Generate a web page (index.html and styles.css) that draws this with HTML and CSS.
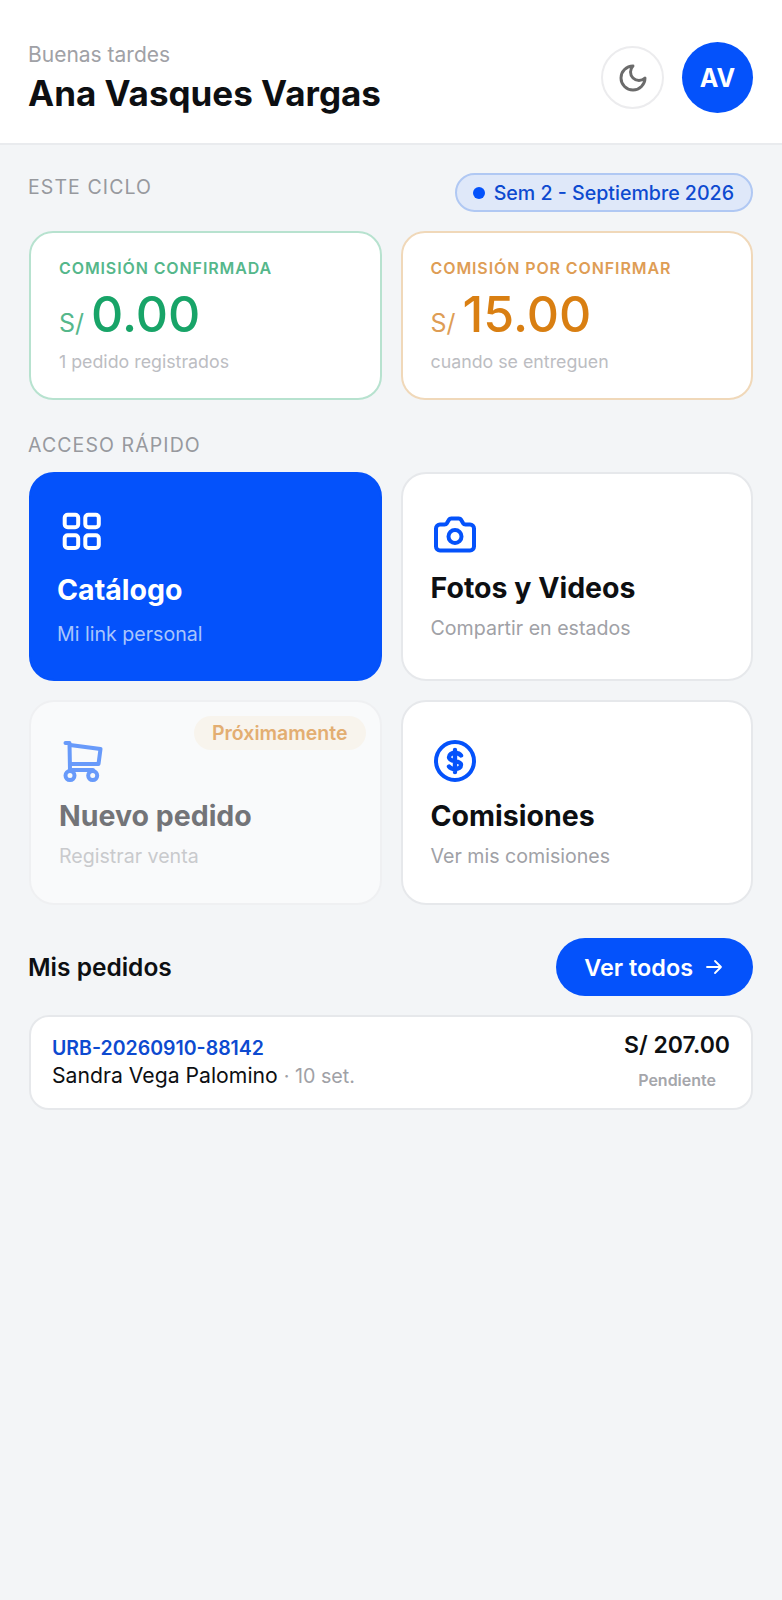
FILE: index.html
```html
<!DOCTYPE html>
<html lang="es">

<head>
    <meta charset="UTF-8">
    <meta name="viewport" content="width=device-width, initial-scale=1.0">
    <title>Inicio</title>
    <link rel="stylesheet" href="styles.css">
</head>

<body>
    <header class="topbar">
        <div class="topbar-text">
            <p class="greeting">Buenas tardes</p>
            <h1 class="user-name">Ana Vasques Vargas</h1>
        </div>
        <div class="topbar-actions">
            <button class="theme-btn" type="button" aria-label="Tema">
                <svg viewBox="0 0 24 24" width="32" height="32" fill="none" stroke="#6b6b6b" stroke-width="2.2" stroke-linecap="round" stroke-linejoin="round">
                    <path d="M12 3a6 6 0 0 0 9 9 9 9 0 1 1-9-9Z"/>
                </svg>
            </button>
            <div class="avatar">AV</div>
        </div>
    </header>

    <main class="content">
        <div class="cycle-row">
            <h2 class="section-label cycle-label">ESTE CICLO</h2>
            <span class="cycle-pill"><i class="cycle-dot"></i>Sem 2 - Septiembre 2026</span>
        </div>

        <section class="two-cols">
            <div class="stat-card stat-green">
                <p class="stat-title">COMISIÓN CONFIRMADA</p>
                <p class="stat-amount"><span class="stat-currency">S/</span><span class="stat-value">0.00</span></p>
                <p class="stat-note">1 pedido registrados</p>
            </div>
            <div class="stat-card stat-orange">
                <p class="stat-title">COMISIÓN POR CONFIRMAR</p>
                <p class="stat-amount"><span class="stat-currency">S/</span><span class="stat-value">15.00</span></p>
                <p class="stat-note">cuando se entreguen</p>
            </div>
        </section>

        <h2 class="section-label quick-label">ACCESO RÁPIDO</h2>

        <section class="two-cols quick-grid">
            <a class="quick-card quick-primary" href="#">
                <svg class="quick-icon" viewBox="0 0 48 48" width="48" height="48" fill="none" stroke="#fff" stroke-width="4" stroke-linejoin="round">
                    <rect x="6.700" y="7.700" width="13.500" height="12.600" rx="3"/>
                    <rect x="27.300" y="7.700" width="13.500" height="12.600" rx="3"/>
                    <rect x="6.700" y="28.300" width="13.500" height="12.600" rx="3"/>
                    <rect x="27.300" y="28.300" width="13.500" height="12.600" rx="3"/>
                </svg>
                <h3 class="quick-title">Catálogo</h3>
                <p class="quick-sub">Mi link personal</p>
            </a>
            <a class="quick-card" href="#">
                <svg class="quick-icon" viewBox="1 0 48 48" width="48" height="48" fill="none" stroke="#0452fb" stroke-width="4" stroke-linecap="round" stroke-linejoin="round">
                    <path d="M10 14.500h4.500a3 3 0 0 0 2.500-1.400l1.800-3.200a3 3 0 0 1 2.600-1.400h7.200a3 3 0 0 1 2.600 1.400l1.800 3.200a3 3 0 0 0 2.500 1.400H40a4 4 0 0 1 4 4v18a4 4 0 0 1-4 4H10a4 4 0 0 1-4-4v-18a4 4 0 0 1 4-4Z"/>
                    <circle cx="25" cy="26.500" r="6.500"/>
                </svg>
                <h3 class="quick-title">Fotos y Videos</h3>
                <p class="quick-sub">Compartir en estados</p>
            </a>
            <a class="quick-card quick-row2 quick-disabled" href="#">
                <span class="soon-badge">Próximamente</span>
                <svg class="quick-icon" viewBox="0 0 48 48" width="48" height="48" fill="none" stroke="#689afa" stroke-width="4" stroke-linecap="round" stroke-linejoin="round">
                    <path d="M7.500 6h4l.5 27"/>
                    <path d="M12 8l30.500 4-2 15H12"/>
                    <path d="M12 33h23"/>
                    <circle cx="12" cy="38.600" r="4.500"/>
                    <circle cx="34.700" cy="38.600" r="4.500"/>
                </svg>
                <h3 class="quick-title">Nuevo pedido</h3>
                <p class="quick-sub">Registrar venta</p>
            </a>
            <a class="quick-card quick-row2" href="#">
                <svg class="quick-icon" viewBox="1 0 48 48" width="48" height="48" fill="none" stroke="#0452fb" stroke-linecap="round" stroke-linejoin="round">
                    <circle cx="25" cy="24" r="19" stroke-width="4"/>
                    <path d="M31 18.500c-1-1.500-3-2.500-6-2.500-3.500 0-6 1.500-6 4.200 0 5.600 12 2.200 12 7.600 0 2.700-2.500 4.200-6 4.200-3 0-5-1-6-2.500M25 13v22" stroke-width="4.400"/>
                </svg>
                <h3 class="quick-title">Comisiones</h3>
                <p class="quick-sub">Ver mis comisiones</p>
            </a>
        </section>

        <div class="orders-head">
            <h2 class="orders-title">Mis pedidos</h2>
            <a class="all-btn" href="#">Ver todos
                <svg viewBox="0 0 18 18" width="18" height="18" fill="none" stroke="#fff" stroke-width="1.800" stroke-linecap="round" stroke-linejoin="round">
                    <path d="M2 9h14M10 3l6 6-6 6"/>
                </svg>
            </a>
        </div>

        <div class="order-card">
            <div>
                <p class="order-code">URB-20260910-88142</p>
                <p class="order-client">Sandra Vega Palomino <span class="order-date">· 10 set.</span></p>
            </div>
            <div class="order-side">
                <p class="order-total">S/ 207.00</p>
                <p class="order-status">Pendiente</p>
            </div>
        </div>
    </main>
</body>

</html>
```

FILE: styles.css
```css
* {
    box-sizing: border-box;
}

body {
    margin: 0;
    min-height: 1600px;
    background-color: #f3f5f7;
    color: #0d0f12;
    font-family: Inter, "Liberation Sans", sans-serif;
}

p, h1, h2, h3 {
    margin: 0;
}

a {
    color: inherit;
    text-decoration: none;
}

/* cabecera */
.topbar {
    display: flex;
    justify-content: space-between;
    align-items: center;
    height: 145px;
    padding: 12px 29px 0 28px;
    background-color: #fff;
    border-bottom: 2px solid #e9ebee;
}

.topbar-text {
    margin-top: 2px;
}

.greeting {
    color: #a0a1a6;
    font-size: 21px;
    line-height: 24px;
}

.user-name {
    margin-top: 5px;
    font-size: 35px;
    font-weight: 700;
    line-height: 42px;
}

.topbar-actions {
    display: flex;
    align-items: center;
    gap: 18px;
}

.theme-btn {
    display: flex;
    justify-content: center;
    align-items: center;
    width: 63px;
    height: 63px;
    padding: 0;
    background-color: #fff;
    border: 2px solid #ececee;
    border-radius: 50%;
}

.avatar {
    display: flex;
    justify-content: center;
    align-items: center;
    width: 71px;
    height: 71px;
    background-color: #0452fb;
    border-radius: 50%;
    color: #fff;
    font-size: 25px;
    font-weight: 700;
}

.content {
    padding: 0 29px;
}

.cycle-row {
    display: flex;
    justify-content: space-between;
    align-items: flex-start;
    padding-top: 28px;
}

.section-label {
    margin-left: -1px;
    color: #97999e;
    font-size: 19.5px;
    font-weight: 400;
    letter-spacing: 1.1px;
    line-height: 24px;
}

.cycle-label {
    margin-top: 2px;
}

.cycle-pill {
    display: flex;
    align-items: center;
    gap: 9px;
    height: 39px;
    padding: 0 17px 0 16px;
    background-color: #dfe8f9;
    border: 2px solid #b0c8f3;
    border-radius: 20px;
    color: #0d4ad0;
    font-size: 19.6px;
    font-weight: 500;
}

.cycle-dot {
    width: 12px;
    height: 12px;
    background-color: #0452fb;
    border-radius: 50%;
}

.two-cols {
    display: grid;
    grid-template-columns: 1fr 1fr;
    gap: 19px;
}

/* tarjetas de comision */
.stat-card {
    height: 169px;
    margin-top: 19px;
    padding: 25px 28px 0;
    background-color: #fff;
    border: 2px solid;
    border-radius: 24px;
}

.stat-green {
    border-color: #b7e2cf;
}

.stat-orange {
    border-color: #f0d8b9;
}

.stat-title {
    font-size: 16px;
    font-weight: 600;
    letter-spacing: 0.9px;
    line-height: 20px;
}

.stat-green .stat-title,
.stat-green .stat-currency {
    color: #55b78b;
}

.stat-orange .stat-title,
.stat-orange .stat-currency {
    color: #de9d55;
}

.stat-amount {
    display: flex;
    align-items: baseline;
    gap: 7px;
    margin-top: 11px;
}

.stat-currency {
    font-size: 25px;
    line-height: 1;
}

.stat-value {
    font-size: 50px;
    font-weight: 500;
    line-height: 1;
}

.stat-green .stat-value {
    color: #18a468;
}

.stat-orange .stat-value {
    color: #d97f12;
}

.stat-note {
    margin-top: 11px;
    color: #bcbdc2;
    font-size: 17.8px;
    line-height: 24px;
}

.quick-label {
    margin-top: 33px;
}

/* accesos rapidos */
.quick-grid {
    margin-top: 15px;
}

.quick-card {
    position: relative;
    display: block;
    height: 209px;
    padding: 36px 28px 0;
    background-color: #fff;
    border: 2px solid #e6e8eb;
    border-radius: 25px;
}

.quick-icon {
    display: block;
}

.quick-title {
    margin-top: 12px;
    font-size: 28.5px;
    font-weight: 700;
    line-height: 36px;
}

.quick-sub {
    margin-top: 10px;
    color: #a0a1a6;
    font-size: 19.6px;
    line-height: 24px;
}

.quick-primary {
    padding: 33px 26px 0;
    background-color: #0452fb;
    border-color: #0452fb;
    color: #fff;
}

.quick-primary .quick-icon {
    margin-left: 1px;
}

.quick-primary .quick-title {
    margin-top: 17px;
}

.quick-primary .quick-sub {
    margin-top: 14px;
    color: #a9c5fc;
}

.quick-row2 {
    height: 205px;
    padding-top: 35px;
}

.quick-row2 .quick-title {
    margin-top: 13px;
}

.quick-disabled {
    background-color: #f9fafb;
    border-color: #eff0f2;
}

.quick-disabled .quick-icon {
    margin-left: -1px;
}

.quick-disabled .quick-title {
    color: #737478;
}

.quick-disabled .quick-sub {
    color: #c9cacd;
}

.soon-badge {
    position: absolute;
    top: 14px;
    right: 14px;
    padding: 6px 18px;
    background-color: #f8f4ed;
    border-radius: 18px;
    color: #e3ae72;
    font-size: 19.5px;
    font-weight: 600;
    line-height: 22px;
}

/* pedidos */
.orders-head {
    display: flex;
    justify-content: space-between;
    align-items: center;
    margin-top: 33px;
}

.orders-title {
    margin-left: -1px;
    font-size: 24.5px;
    font-weight: 600;
}

.all-btn {
    display: flex;
    align-items: center;
    gap: 12px;
    height: 58px;
    padding: 0 30px 0 28px;
    background-color: #0452fb;
    border-radius: 30px;
    color: #fff;
    font-size: 23.4px;
    font-weight: 600;
}

.order-card {
    display: flex;
    justify-content: space-between;
    align-items: center;
    height: 95px;
    margin-top: 19px;
    padding: 0 21px;
    background-color: #fff;
    border: 2px solid #e6e8eb;
    border-radius: 20px;
}

.order-code {
    color: #0d4ad0;
    font-size: 19.5px;
    font-weight: 600;
    line-height: 26px;
}

.order-client {
    font-size: 21.2px;
    line-height: 28px;
}

.order-date {
    color: #a0a1a6;
    font-size: 19.7px;
}

.order-side {
    margin-bottom: 6px;
    text-align: right;
}

.order-total {
    font-size: 23px;
    font-weight: 600;
    line-height: 30px;
}

.order-status {
    margin-top: 10px;
    padding-right: 14px;
    color: #a5a6ab;
    font-size: 16px;
    font-weight: 600;
    line-height: 20px;
}
```
